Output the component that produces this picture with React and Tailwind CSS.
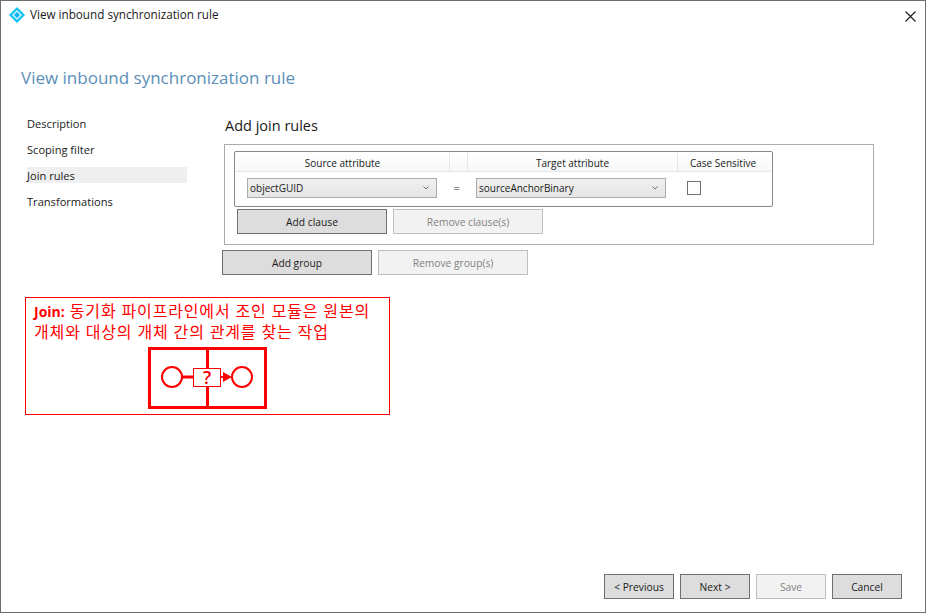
import React from "react";

const navItems = ["Description", "Scoping filter", "Join rules", "Transformations"];

function WizardButton({ label, disabled, className = "" }) {
    return (
        <button
            className={`flex h-[25px] items-center justify-center border pt-[2px] text-[10.25px] ${
                disabled
                    ? "border-[#bfbfbf] bg-[#f2f2f2] text-[#838383]"
                    : "border-[#707070] bg-[#dddddd] text-[#1a1a1a]"
            } ${className}`}
        >
            {label}
        </button>
    );
}

function ComboBox({ value }) {
    return (
        <div className="flex h-5 w-[190px] items-center justify-between border border-[#acacac] bg-gradient-to-b from-[#f0f0f0] to-[#e5e5e5] pl-[2px] pr-[7px] text-[10px] text-[#1a1a1a]">
            <span>{value}</span>
            <svg width="6" height="4" viewBox="0 0 6 4" fill="none" stroke="#707070" strokeWidth="1">
                <path d="M0.5 0.5 L3 3 L5.5 0.5" />
            </svg>
        </div>
    );
}

function AppIcon() {
    return (
        <svg width="16" height="16" viewBox="0 0 16 16">
            <path d="M8 0 L16 8 L8 16 L0 8 Z" fill="#10c4f4" />
            <path d="M8 3.2 L12.8 8 L8 12.8 L3.2 8 Z" fill="#ffffff" />
            <path d="M8 4.8 L11.2 8 L8 11.2 L4.8 8 Z" fill="#10b4f0" />
        </svg>
    );
}

function JoinDiagram() {
    return (
        <svg width="120" height="62" viewBox="0 0 120 62" fill="none" stroke="#ff0000">
            <rect x="1.5" y="1.5" width="116" height="59" strokeWidth="3" />
            <path d="M59.5 1.5 V60.5" strokeWidth="3" />
            <circle cx="24" cy="30" r="10" strokeWidth="2" fill="#ffffff" />
            <circle cx="94" cy="30" r="10" strokeWidth="2" fill="#ffffff" />
            <path d="M34 30 H45" strokeWidth="3" />
            <rect x="45.5" y="21.5" width="27" height="18" strokeWidth="1" fill="#ffffff" />
            <path d="M73 30 H76" strokeWidth="2" />
            <path d="M75 25 L84 30 L75 35 Z" fill="#ff0000" stroke="none" />
            <text x="59" y="37" textAnchor="middle" fontSize="18" fontWeight="600" fill="#ff0000" stroke="none" fontFamily="'Open Sans', sans-serif">?</text>
        </svg>
    );
}

export default function App() {
    return (
        <div className="flex h-[613px] w-[926px] flex-col overflow-hidden border border-[#6e6e6e] bg-white font-['Open_Sans','Noto_Sans_CJK_KR',sans-serif] text-[#1a1a1a]">
            <div className="flex h-[28px] shrink-0 items-center pl-2 pr-[9px]">
                <AppIcon />
                <span className="ml-[5px] text-[11.7px]">View inbound synchronization rule</span>
                <svg className="ml-auto mt-[2px]" width="11" height="11" viewBox="0 0 11 11" stroke="#1a1a1a" strokeWidth="1.1">
                    <path d="M0.5 0.5 L10.5 10.5 M10.5 0.5 L0.5 10.5" />
                </svg>
            </div>

            <h1 className="ml-5 mt-[35px] text-[17px] leading-7 text-[#5b8fb9]">View inbound synchronization rule</h1>

            <div className="mt-6 flex">
                <nav className="ml-[26px] -mt-px flex w-40 flex-col gap-[10px] text-[11.1px]">
                    {navItems.map((item) => (
                        <div key={item} className={`h-4 leading-[18px] ${item === "Join rules" ? "bg-[#efefef]" : ""}`}>
                            {item}
                        </div>
                    ))}
                </nav>

                <div className="ml-[35px]">
                    <h2 className="ml-[3px] text-[14.5px] leading-5">Add join rules</h2>
                    <div className="ml-[2px] mt-2 h-[101px] w-[650px] border border-[#acacac] pl-[9px] pt-[6px]">
                        <div className="h-[56px] w-[539px] rounded-[2px] border border-[#828790] p-px">
                            <div className="flex h-[19px] border-b border-[#e3e6ea] bg-gradient-to-b from-white to-[#f7f8f9] text-center text-[10px] leading-[20px]">
                                <div className="w-[214px] border-r border-[#e3e6ea]">Source attribute</div>
                                <div className="w-[18px] border-r border-[#e3e6ea]"></div>
                                <div className="w-[210px] border-r border-[#e3e6ea]">Target attribute</div>
                                <div className="w-[90px]">Case Sensitive</div>
                            </div>
                            <div className="mt-[6px] flex items-center pl-[11px]">
                                <ComboBox value="objectGUID" />
                                <span className="w-[39px] text-center text-[11.5px]">=</span>
                                <ComboBox value="sourceAnchorBinary" />
                                <span className="ml-[21px] h-[14px] w-[14px] border border-[#707070] bg-white"></span>
                            </div>
                        </div>
                        <div className="ml-[3px] mt-[2px] flex gap-[6px]">
                            <WizardButton label="Add clause" className="w-[150px]" />
                            <WizardButton label="Remove clause(s)" disabled className="w-[150px]" />
                        </div>
                    </div>
                    <div className="mt-[5px] flex gap-[6px]">
                        <WizardButton label="Add group" className="w-[150px]" />
                        <WizardButton label="Remove group(s)" disabled className="w-[150px]" />
                    </div>
                </div>
            </div>

            <div className="ml-6 mt-[22px] h-[118px] w-[365px] border border-[#ff0000] pl-2 pr-1 pt-[3px] text-[#ff0000]">
                <p className="break-keep text-[16px] leading-5 tracking-[0.85px]">
                    <b className="text-[14px] font-bold tracking-normal">Join:</b> 동기화 파이프라인에서 조인 모듈은 원본의 개체와 대상의 개체 간의 관계를 찾는 작업
                </p>
                <div className="ml-[114px] mt-[5px]">
                    <JoinDiagram />
                </div>
            </div>

            <div className="mt-auto mb-[13px] flex justify-end gap-[6px] pr-[23px]">
                <WizardButton label="< Previous" className="w-[70px]" />
                <WizardButton label="Next >" className="w-[70px]" />
                <WizardButton label="Save" disabled className="w-[70px]" />
                <WizardButton label="Cancel" className="w-[70px]" />
            </div>
        </div>
    );
}
